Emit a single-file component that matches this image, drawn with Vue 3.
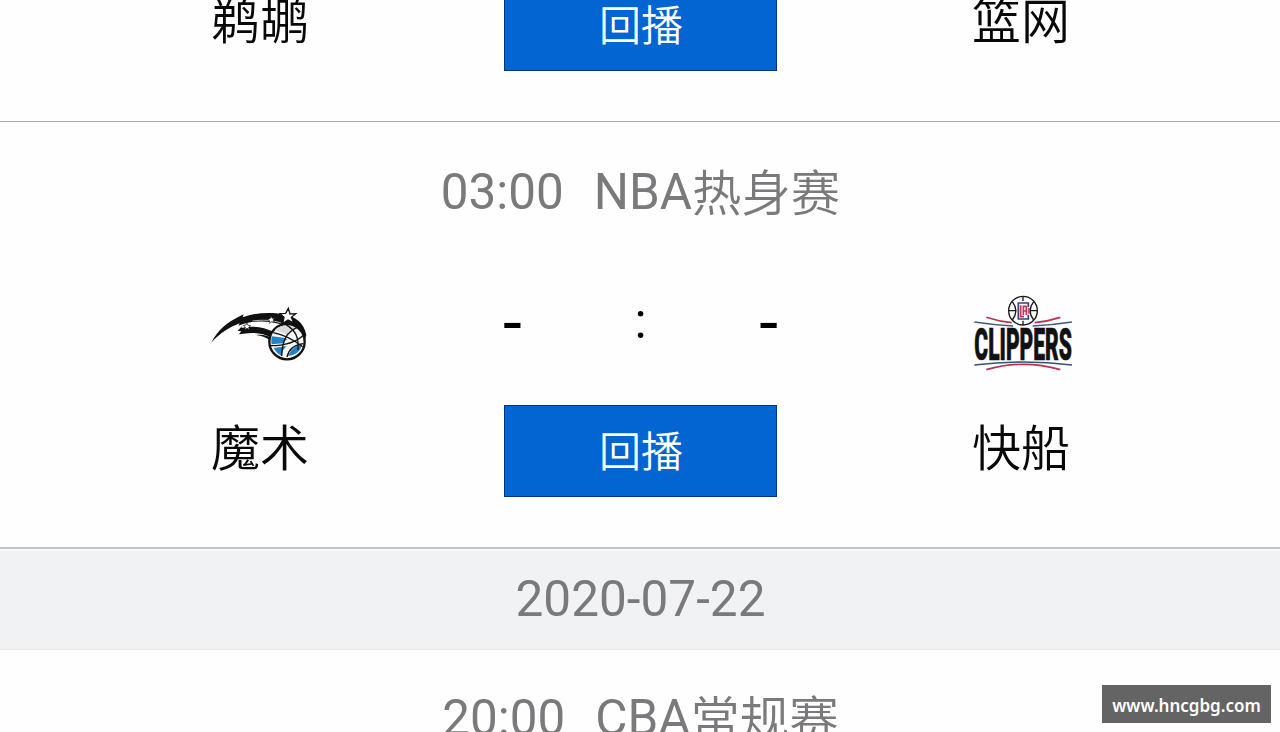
<script setup>
const previous = { home: '鹈鹕', away: '篮网' }
const current = { time: '03:00', league: 'NBA', stage: '热身赛', home: '魔术', away: '快船' }
const next = { time: '20:00', league: 'CBA', stage: '常规赛' }
const date = '2020-07-22'
</script>

<template>
  <main class="schedule">
    <section class="match match-previous">
      <div class="match-row">
        <div class="team-name">{{ previous.home }}</div>
        <button class="replay">回播</button>
        <div class="team-name">{{ previous.away }}</div>
      </div>
    </section>

    <section class="match match-current">
      <h2 class="match-title">
        <span>{{ current.time }}</span>
        <span>{{ current.league }}<span class="stage">{{ current.stage }}</span></span>
      </h2>
      <div class="match-row score-row">
        <svg class="logo logo-magic" width="102" height="62" viewBox="0 0 306 186">
          <!-- comet tail -->
          <path d="M7 122C27 84 53 62 92 43l12-6-3 9c36-14 82-17 122-9 38 7 62 27 69 62l-6 20-20-38-45-12c-32-11-68-13-104-7-10 2-20 5-29 9l4-7C65 74 33 93 7 122z" fill="#111" />
          <path d="M86 87l15-17-4 8c33-8 66-3 98 12l-8 17c-26-14-51-17-84-12l-13 2 7-9z" fill="#111" />
          <path d="M130 57c30-4 60-3 86 6" fill="none" stroke="#fff" stroke-width="2" />
          <path d="M141 99c17-2 31 0 43 7l-2 8c-12-8-24-12-41-15z" fill="#111" />
          <!-- ball -->
          <circle cx="234" cy="119" r="53" fill="#f6f6f6" stroke="#111" stroke-width="7" />
          <path d="M198 83c15-13 42-17 61-5l-21 11 5 13c-14-8-29-13-45-19z" fill="#d8dadd" />
          <path d="M189 103l34 4 12 4-13 13-34 3c-2-9-1-17 1-24zM194 138l39-6c-9 9-15 18-16 29-10-5-18-13-23-23zM238 162c4-13 13-23 25-30l16-5c-4 21-19 33-41 35z" fill="#2382c6" />
          <path d="M193 92c26 5 55 17 88 42M184 131c36 0 76-9 101-33M231 68c29 17 39 39 36 76M264 76c-30 16-43 31-46 86M234 165c5-22 20-37 49-40" fill="none" stroke="#111" stroke-width="4" />
          <!-- stars -->
          <path d="M238 19l5 17 17-1-13 11 8 17-18-9-16 11 4-19-12-11 17-1z" fill="#fff" stroke="#111" stroke-width="4" />
          <path d="M186 42l3 7 8-1-5 6 4 7-8-2-6 5v-8l-7-4 8-2zM114 63l3 7 8 1-6 5 2 7-7-4-7 4 2-8-6-5 8-1z" fill="#fff" stroke="#111" stroke-width="2" />
        </svg>
        <div class="score">
          <span class="score-value">-</span>
          <span class="score-colon">:</span>
          <span class="score-value">-</span>
        </div>
        <svg class="logo logo-clippers" width="106" height="82" viewBox="0 0 318 246">
          <g fill="none" stroke-width="5">
            <path d="M13 90q60 9 116 12M188 102q60-3 118-12" stroke="#3b5f80" />
            <path d="M49 76q38 13 76 16M194 92q40-4 77-16" stroke="#b83350" />
            <path d="M13 219q146-18 293 0" stroke="#2f5578" />
            <path d="M49 233q110-32 222 0" stroke="#b83350" />
          </g>
          <circle cx="159" cy="56" r="43" fill="#fff" stroke="#181818" stroke-width="4" />
          <path d="M159 13v14M159 86v13M116 56h20M182 56h20M127 29c14 18 14 37 0 55M191 29c-14 18-14 37 0 55" fill="none" stroke="#181818" stroke-width="4" />
          <path d="M175 46V33h-30v48h30V68" fill="none" stroke="#33427d" stroke-width="5" />
          <path d="M152 40v34h10M160 69V43h9v26M160 57h9M177 48v17" fill="none" stroke="#cf3158" stroke-width="5" />
          <text x="13" y="203" textLength="293" lengthAdjust="spacingAndGlyphs" class="clippers-word">CLIPPERS</text>
        </svg>
      </div>
      <div class="match-row">
        <div class="team-name">{{ current.home }}</div>
        <button class="replay">回播</button>
        <div class="team-name">{{ current.away }}</div>
      </div>
    </section>

    <div class="date-bar">{{ date }}</div>

    <section class="match match-next">
      <h2 class="match-title">
        <span>{{ next.time }}</span>
        <span>{{ next.league }}<span class="stage">{{ next.stage }}</span></span>
      </h2>
    </section>

    <div class="site-tag">www.hncgbg.com</div>
  </main>
</template>

<style>
body {
  margin: 0;
  overflow: hidden;
}
</style>

<style scoped>
.schedule {
  position: relative;
  display: flex;
  flex-direction: column;
  width: 1280px;
  height: 732px;
  overflow: hidden;
  background: #fefefe;
  font-family: Roboto, "Noto Sans CJK SC", sans-serif;
}

.match {
  box-sizing: border-box;
  flex-shrink: 0;
}

.match-previous {
  display: flex;
  flex-direction: column;
  justify-content: flex-end;
  height: 122px;
  padding-bottom: 50px;
  border-bottom: 1px solid #adadb0;
}

.match-current {
  height: 427px;
  padding-top: 34px;
  border-bottom: 2px solid #c2c5c9;
}

.match-next {
  height: 82px;
  padding-top: 32px;
}

.match-title {
  display: flex;
  justify-content: center;
  gap: 30px;
  height: 72px;
  margin: 0;
  padding-left: 1px;
  color: #7a7a7d;
  font-size: 49.4px;
  font-weight: 400;
  line-height: 72px;
  white-space: nowrap;
}

.stage {
  font-weight: 350;
  line-height: 1;
  vertical-align: -2px;
}

.match-row {
  display: grid;
  grid-template-columns: 1fr 273px 1fr;
  align-items: center;
  flex-shrink: 0;
  height: 92px;
  padding: 0 15px 0 16px;
}

.score-row {
  height: 177px;
}

.team-name {
  color: #080808;
  font-size: 49px;
  font-weight: 350;
  line-height: 72px;
  text-align: center;
  padding-bottom: 5px;
}

.match-current .team-name {
  padding-bottom: 3px;
}

.replay {
  height: 92px;
  padding: 0 0 6px 1px;
  border: 1px solid #02347c;
  background: #0265d1;
  color: #fff;
  font-family: inherit;
  font-size: 42px;
  font-weight: 350;
}

.logo {
  justify-self: center;
}

.logo-magic {
  margin-top: 33px;
}

.logo-clippers {
  margin: 33px 0 0 3px;
}

.score {
  display: flex;
  justify-content: space-between;
  align-items: center;
  margin: 9px -1px 0;
  color: #000;
  line-height: 60px;
}

.score-value {
  padding-top: 4px;
  font-size: 68px;
  font-weight: 400;
}

.score-colon {
  font-size: 50px;
  font-weight: 400;
}

.clippers-word {
  font-family: Roboto, sans-serif;
  font-size: 134px;
  font-weight: 900;
  fill: #111;
  stroke: #111;
  stroke-width: 2px;
}

.date-bar {
  box-sizing: border-box;
  flex-shrink: 0;
  height: 101px;
  padding-left: 1px;
  border-top: 2px solid #fafafa;
  border-bottom: 1px solid #e5e7e9;
  background: #f1f2f4;
  color: #7a7a7d;
  font-size: 49.5px;
  font-weight: 400;
  line-height: 96px;
  text-align: center;
}

.site-tag {
  position: absolute;
  right: 9px;
  bottom: 9px;
  width: 169px;
  height: 38px;
  background: #636463;
  color: #fff;
  font-family: "Noto Sans", sans-serif;
  font-size: 17px;
  font-weight: 600;
  line-height: 42px;
  text-align: center;
}
</style>
